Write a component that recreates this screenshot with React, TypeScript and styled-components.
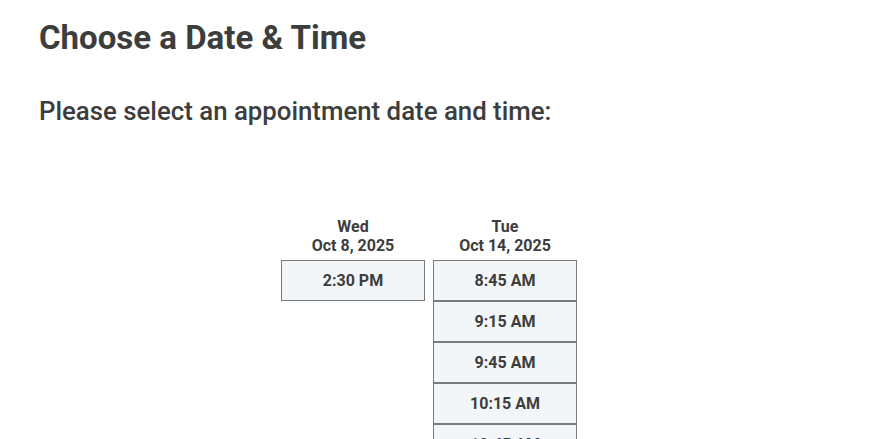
import styled, { createGlobalStyle } from 'styled-components'

const GlobalStyle = createGlobalStyle`
  html, body {
    margin: 0;
    padding: 0;
    background: #ffffff;
  }

  body {
    font-family: Roboto, 'Liberation Sans', Arial, sans-serif;
    color: #3d3d3d;
  }
`

type Day = {
  weekday: string
  date: string
  slots: string[]
}

const days: Day[] = [
  { weekday: 'Wed', date: 'Oct 8, 2025', slots: ['2:30 PM'] },
  {
    weekday: 'Tue',
    date: 'Oct 14, 2025',
    slots: ['8:45 AM', '9:15 AM', '9:45 AM', '10:15 AM', '10:45 AM'],
  },
]

export default function App() {
  return (
    <>
      <GlobalStyle />
      <Page>
        <Title>Choose a Date &amp; Time</Title>
        <Prompt>Please select an appointment date and time:</Prompt>

        <Schedule>
          {days.map(day => (
            <Column key={day.date}>
              <DayHead>
                {day.weekday}
                <br />
                {day.date}
              </DayHead>
              <Slots>
                {day.slots.map(slot => (
                  <Slot key={slot} type="button">
                    {slot}
                  </Slot>
                ))}
              </Slots>
            </Column>
          ))}
        </Schedule>
      </Page>
    </>
  )
}

const Page = styled.main`
  display: flex;
  flex-direction: column;
  padding: 18px 0 0 39px;
  height: 439px;
  box-sizing: border-box;
  overflow: hidden;
`

const Title = styled.h1`
  margin: 0;
  font-size: 33px;
  line-height: 40px;
  font-weight: 700;
`

const Prompt = styled.p`
  margin: 38px 0 0;
  font-size: 25.8px;
  line-height: 31px;
  font-weight: 500;
`

const Schedule = styled.div`
  display: flex;
  justify-content: center;
  align-items: flex-start;
  gap: 8px;
  margin-top: 90px;
  margin-left: -39px;
  padding-right: 19px;
`

const Column = styled.div`
  display: flex;
  flex-direction: column;
  width: 144px;
`

const DayHead = styled.div`
  font-size: 16px;
  line-height: 19px;
  font-weight: 700;
  text-align: center;
  margin-bottom: 5px;
`

const Slots = styled.div`
  display: flex;
  flex-direction: column;
`

const Slot = styled.button`
  height: 41px;
  padding: 0;
  margin: 0;
  border: 1px solid #7a7a7a;
  background: #f3f6f9;
  color: #3d3d3d;
  font-family: inherit;
  font-size: 16px;
  line-height: 19px;
  font-weight: 700;
  text-align: center;
  cursor: pointer;
`
